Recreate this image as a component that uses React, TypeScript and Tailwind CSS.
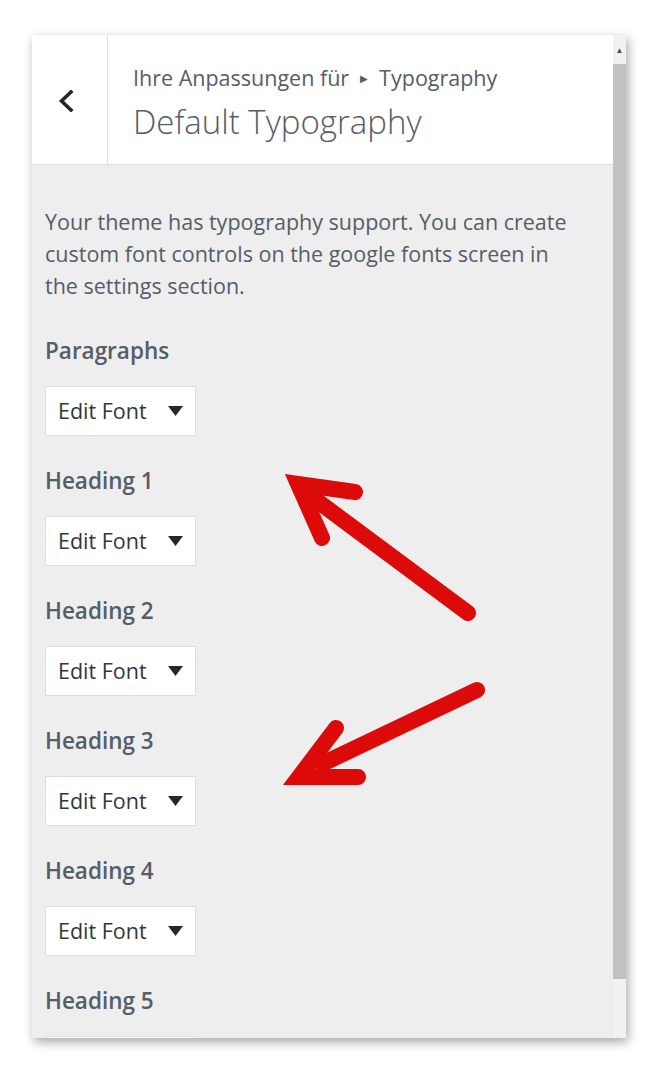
const sections = ["Paragraphs", "Heading 1", "Heading 2", "Heading 3", "Heading 4", "Heading 5"];

function FontControl({ label }: { label: string }) {
  return (
    <div className="flex flex-col items-start">
      <h3 className="h-[30px] text-[22.5px] font-semibold leading-[30px] text-[#555d66]">{label}</h3>
      <button
        type="button"
        className="mt-5 flex h-[50px] w-[151px] items-center justify-between border border-[#dddddd] bg-white pl-[12px] pr-[12px] text-[21.5px] text-[#32373c]"
      >
        <span>Edit Font</span>
        <svg width="15" height="10" viewBox="0 0 15 10">
          <path d="M0 0 H15 L7.5 10 Z" fill="#23282d" />
        </svg>
      </button>
    </div>
  );
}

function Arrows() {
  return (
    <svg className="pointer-events-none absolute left-0 top-0" width="658" height="1071" viewBox="0 0 658 1071">
      <g fill="none" stroke="#dd0a0a" strokeWidth="16" strokeLinecap="round">
        <path d="M468 613 L316 500" />
        <path d="M355 492 L298 484 L322 538" strokeLinejoin="miter" />
        <path d="M477 690 L322 764" />
        <path d="M336 728 L299 777 L358 777" strokeLinejoin="miter" />
      </g>
    </svg>
  );
}

export default function App() {
  return (
    <div className="relative h-[1071px] w-[658px] bg-white" style={{ fontFamily: '"Open Sans", "Noto Sans", sans-serif' }}>
      <div className="absolute left-[32px] top-[35px] flex h-[1003px] w-[594px] overflow-hidden bg-[#eeeeee] shadow-[2px_4px_10px_rgba(0,0,0,0.35)]">
        <div className="flex min-w-0 flex-1 flex-col">
          <header className="flex h-[130px] shrink-0 border-b border-[#dddddd] bg-white">
            <div className="flex w-[76px] items-center justify-center border-r border-[#dddddd] pr-[8px] pt-[2px]">
              <svg width="16" height="22" viewBox="0 0 16 22">
                <path d="M13 2 L3.5 11 L13 20" fill="none" stroke="#23282d" strokeWidth="3.6" strokeLinecap="square" />
              </svg>
            </div>
            <div className="flex flex-col justify-center pl-[25px] pt-[8px]">
              <div className="flex items-center text-[21.5px] leading-[28px] text-[#555d66]">
                <span>Ihre Anpassungen für</span>
                <span className="mx-[11px] text-[10px]">▶</span>
                <span>Typography</span>
              </div>
              <h1 className="mt-[8px] text-[33px] font-light leading-[44px] text-[#555d66]">Default Typography</h1>
            </div>
          </header>
          <div className="flex flex-col pl-[13px] pr-4 pt-[41px]">
            <p className="max-w-[530px] text-[21.5px] leading-[32px] text-[#555d66]">
              Your theme has typography support. You can create custom font controls on the google fonts screen in the
              settings section.
            </p>
            <div className="mt-[34px] flex flex-col gap-[30px]">
              {sections.map((s) => (
                <FontControl key={s} label={s} />
              ))}
            </div>
          </div>
        </div>
        <div className="flex w-[13px] shrink-0 flex-col bg-[#f1f1f1]">
          <div className="flex h-[29px] items-center justify-center text-[8px] text-[#505050]">▲</div>
          <div className="h-[915px] bg-[#c1c1c1]" />
        </div>
      </div>
      <Arrows />
    </div>
  );
}
